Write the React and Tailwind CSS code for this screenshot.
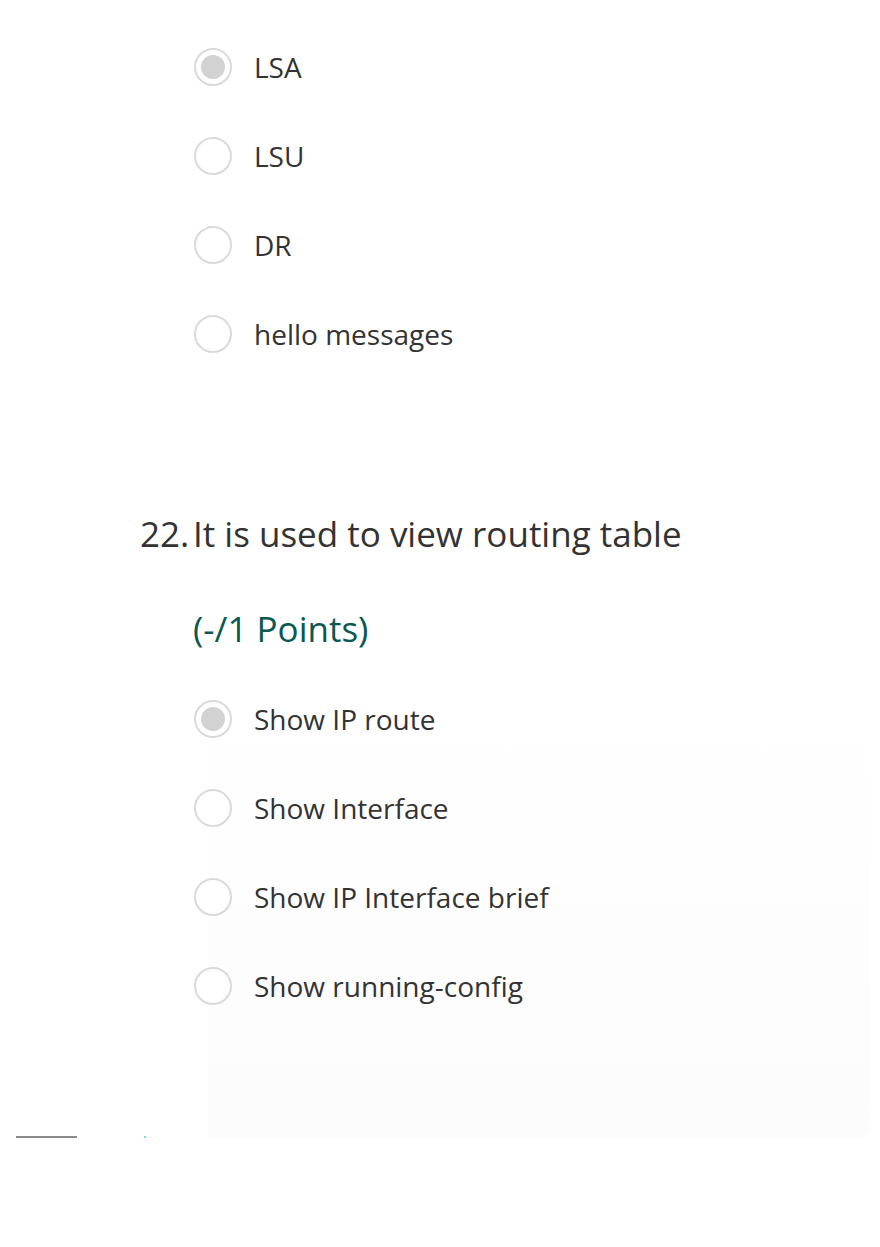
import React from "react";

function Radio({ checked }) {
  return (
    <span className="flex h-[38px] w-[38px] shrink-0 items-center justify-center rounded-full border-2 border-[#dadada] bg-white">
      {checked ? <span className="h-[24px] w-[24px] rounded-full bg-[#d2d2d2]" /> : null}
    </span>
  );
}

function Option({ label, checked }) {
  return (
    <div className="flex h-[89px] items-center gap-[22px] pl-[194px]">
      <Radio checked={checked} />
      <span className="text-[28px] leading-none text-[#333333]">{label}</span>
    </div>
  );
}

export default function App() {
  return (
    <div
      className="relative h-[1247px] w-[880px] overflow-hidden bg-white"
      style={{ fontFamily: '"Open Sans", "Noto Sans", sans-serif' }}
    >
      <div className="absolute left-[208px] top-[670px] h-[468px] w-[662px] rounded-br-[10px] bg-gradient-to-b from-[#ffffff] to-[#fcfcfc]" />
      <div className="relative flex flex-col pt-[22px]">
        <Option label="LSA" checked />
        <Option label="LSU" />
        <Option label="DR" />
        <Option label="hello messages" />

        <div className="mt-[130px] flex h-[50px] items-center pl-[140px] text-[35px] leading-none text-[#333333]">
          <span className="w-[53px]">22.</span>
          <span>It is used to view routing table</span>
        </div>

        <div className="mt-[45px] flex h-[50px] items-center pl-[193px] text-[35px] leading-none text-[#0b5852]">
          (-/1 Points)
        </div>

        <div className="mt-[21px] flex flex-col">
          <Option label="Show IP route" checked />
          <Option label="Show Interface" />
          <Option label="Show IP Interface brief" />
          <Option label="Show running-config" />
        </div>

        <div className="mt-[106px] flex items-center pl-[16px]">
          <span className="h-[2px] w-[61px] bg-[#8a8a8a]" />
          <span className="ml-[67px] h-[2px] w-[2px] bg-[#7fd8e0]" />
        </div>
      </div>
    </div>
  );
}
